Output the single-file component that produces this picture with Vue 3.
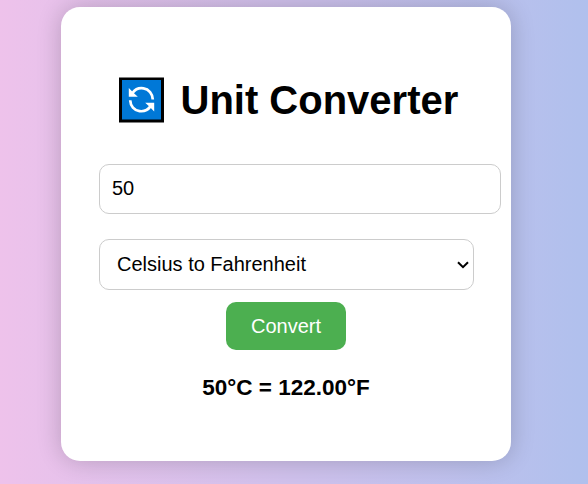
<script setup>
import { ref } from 'vue'

const amount = ref('50')
const mode = ref('c2f')
const result = ref('50°C = 122.00°F')

function convert() {
  const n = parseFloat(amount.value)
  if (Number.isNaN(n)) return
  result.value = mode.value === 'c2f'
    ? `${n}°C = ${((n * 9) / 5 + 32).toFixed(2)}°F`
    : `${n}°F = ${(((n - 32) * 5) / 9).toFixed(2)}°C`
}
</script>

<template>
  <main class="page">
    <section class="card">
      <h1 class="title">
        <svg class="logo" viewBox="0 -0.5 45 46" aria-hidden="true">
          <rect width="45" height="45" fill="#000" />
          <rect x="3" y="2.5" width="39" height="39.5" fill="#0078d7" />
          <g fill="none" stroke="#fff" stroke-width="2.7">
            <path d="M13.5 15.6C16 12 20 10.2 24.5 10.9C29.8 11.7 33.6 16.2 33.8 22" />
            <path d="M11.2 22.8C11.4 28.5 15.2 32.8 20.5 33.6C25 34.2 29 32.4 31.5 28.9" />
          </g>
          <path d="M9.8 10.5V19.3H18.8L15.8 16.5L13 13.7Z" fill="#fff" />
          <path d="M35.2 34V25.2H26.2L29.2 28L32 30.8Z" fill="#fff" />
        </svg>
        <span>Unit Converter</span>
      </h1>
      <input v-model="amount" class="field amount" type="text" />
      <div class="picker">
        <select v-model="mode" class="field mode">
          <option value="c2f">Celsius to Fahrenheit</option>
          <option value="f2c">Fahrenheit to Celsius</option>
        </select>
        <svg class="chevron" viewBox="0 0 12 8" aria-hidden="true">
          <path d="M1 1.2L6 6.2L11 1.2" fill="none" stroke="#000" stroke-width="2" />
        </svg>
      </div>
      <button class="convert" @click="convert">Convert</button>
      <p class="result">{{ result }}</p>
    </section>
  </main>
</template>

<style>
body {
  margin: 0;
  overflow: hidden;
}
</style>

<style scoped>
.page {
  box-sizing: border-box;
  height: 484px;
  padding: 7px 0 0 61px;
  background: linear-gradient(to right, #eec2eb, #b0c0ed);
  font-family: Arial, "Liberation Sans", sans-serif;
  color: #000;
}
.card {
  box-sizing: border-box;
  display: flex;
  flex-direction: column;
  align-items: center;
  width: 450px;
  height: 454px;
  padding: 70px 38px 0;
  border-radius: 19px;
  background: #fff;
  box-shadow: 0 0 25px rgba(0, 0, 0, 0.2);
}
.title {
  display: flex;
  align-items: center;
  align-self: flex-start;
  gap: 16.5px;
  height: 46px;
  margin: 0 0 41px 20px;
  font-size: 40px;
  line-height: 46px;
  font-weight: bold;
  white-space: nowrap;
}
.logo {
  width: 45px;
  height: 46px;
}
.field {
  box-sizing: border-box;
  border: 1px solid #ccc;
  border-radius: 10px;
  background: #fff;
  color: #000;
  font: 20px Arial, "Liberation Sans", sans-serif;
  outline: none;
}
.amount {
  align-self: flex-start;
  width: 402px;
  height: 50px;
  flex-shrink: 0;
  padding: 0 12px 2px;
}
.picker {
  position: relative;
  align-self: flex-start;
  width: 375px;
  height: 51px;
  margin: 25px 0 12px;
}
.mode {
  display: block;
  width: 100%;
  height: 100%;
  padding: 0 17px 1px;
  appearance: none;
}
.chevron {
  position: absolute;
  right: 5px;
  top: 22px;
  width: 12px;
  height: 8px;
  pointer-events: none;
}
.convert {
  width: 120px;
  height: 48px;
  padding: 0;
  border: 0;
  border-radius: 10px;
  background: #4caf50;
  color: #fff;
  font: 20px Arial, "Liberation Sans", sans-serif;
}
.result {
  margin: 25px 0 0;
  font-size: 22.5px;
  line-height: 26px;
  font-weight: bold;
}
</style>
